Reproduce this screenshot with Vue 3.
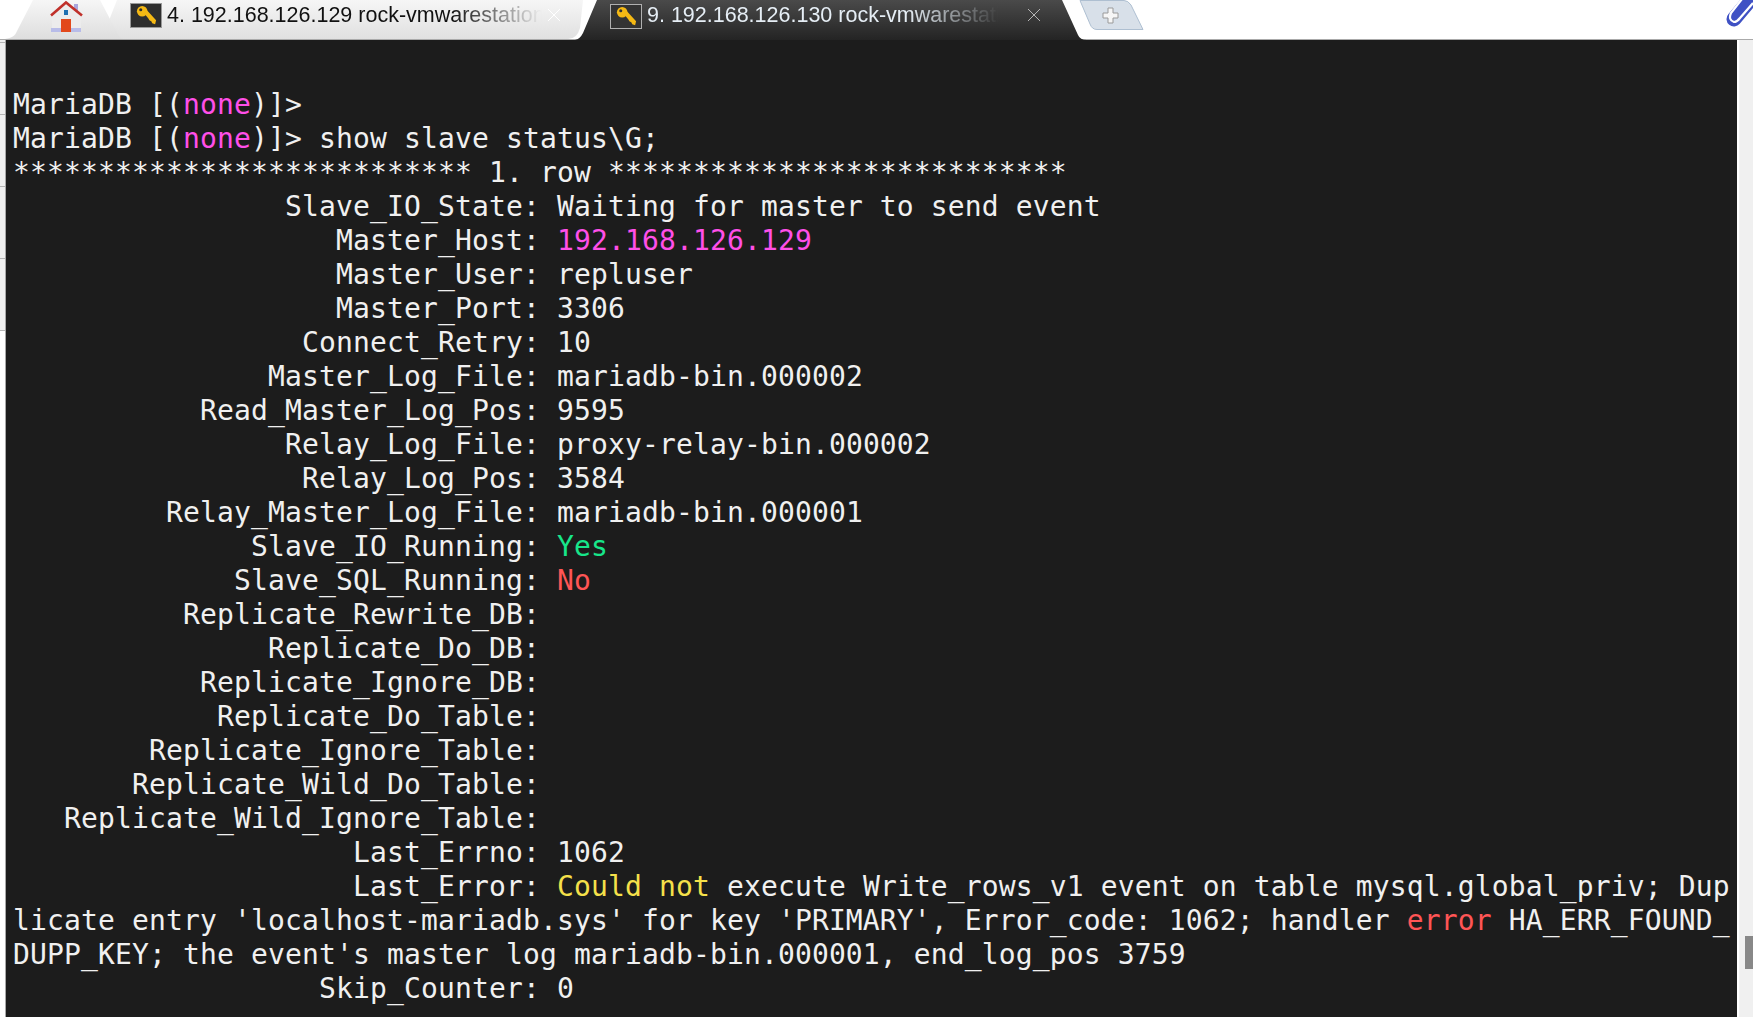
<script setup>
const fields = [
  ['Slave_IO_State', 'Waiting for master to send event'],
  ['Master_Host', '192.168.126.129', 'pink'],
  ['Master_User', 'repluser'],
  ['Master_Port', '3306'],
  ['Connect_Retry', '10'],
  ['Master_Log_File', 'mariadb-bin.000002'],
  ['Read_Master_Log_Pos', '9595'],
  ['Relay_Log_File', 'proxy-relay-bin.000002'],
  ['Relay_Log_Pos', '3584'],
  ['Relay_Master_Log_File', 'mariadb-bin.000001'],
  ['Slave_IO_Running', 'Yes', 'green'],
  ['Slave_SQL_Running', 'No', 'red'],
  ['Replicate_Rewrite_DB', ''],
  ['Replicate_Do_DB', ''],
  ['Replicate_Ignore_DB', ''],
  ['Replicate_Do_Table', ''],
  ['Replicate_Ignore_Table', ''],
  ['Replicate_Wild_Do_Table', ''],
  ['Replicate_Wild_Ignore_Table', ''],
  ['Last_Errno', '1062'],
]
const label = (k) => k.padStart(30, ' ') + ': '
</script>

<template>
  <div class="screen">
    <header class="tabbar">
      <div class="tab home">
        <svg class="shape" viewBox="0 0 119 39" preserveAspectRatio="none"><path d="M0 39 C7 38 10 36 12 31 L28 0 H95 L114 36 Q116 39 119 39 Z" fill="url(#tg1)" /><defs><linearGradient id="tg1" x1="0" y1="0" x2="0" y2="1"><stop offset="0" stop-color="#f6f6f6"/><stop offset="1" stop-color="#dedede"/></linearGradient></defs></svg>
        <svg class="house" viewBox="0 0 34 34">
          <rect x="25" y="4" width="4" height="8" fill="#a9a6dc" />
          <path d="M3 15 L17 4 L32 15 V30 H3 Z" fill="#ececec" />
          <path d="M2 15.5 L17 2.5 L33 15.5" fill="none" stroke="#c0302a" stroke-width="2.6" />
          <rect x="15" y="10" width="4" height="5" fill="#1f6fb0" />
          <rect x="2" y="28" width="30" height="4" fill="#b8bce8" />
          <rect x="12" y="19" width="10" height="13" fill="#e2491c" />
        </svg>
      </div>
      <div class="tab ssh inactive">
        <svg class="shape" viewBox="0 0 489 39" preserveAspectRatio="none"><path d="M0 39 L0 28 L11 0 H477 L474 28 Q471 39 462 39 Z" fill="url(#tg2)" /><defs><linearGradient id="tg2" x1="0" y1="0" x2="0" y2="1"><stop offset="0" stop-color="#f6f6f6"/><stop offset="1" stop-color="#e0e0e0"/></linearGradient></defs></svg>
        <span class="tile dark-tile">
          <svg viewBox="0 0 24 24"><g fill="#f5b914"><circle cx="7.5" cy="7.5" r="5.5" /><path d="M9 9 L12 6 L22 17 L21 21 L18 20 L17 18 L15 17 L14 15 Z" /></g><circle cx="6" cy="6" r="1.6" fill="#2e2e2e" /></svg>
        </span>
        <span class="title">4. 192.168.126.129 rock-vmwarestation</span>
        <svg class="close" viewBox="0 0 14 14"><path d="M1 1 L13 13 M13 1 L1 13" stroke="#fff" stroke-width="1" /></svg>
      </div>
      <div class="tab ssh active">
        <svg class="shape" viewBox="0 0 512 40" preserveAspectRatio="none"><path d="M0 40 Q5 39 8 33 L22 0 H487 L503 35 Q505 40 512 40 Z" fill="url(#tg3)" /><defs><linearGradient id="tg3" x1="0" y1="0" x2="0" y2="1"><stop offset="0" stop-color="#4a4a4a"/><stop offset="1" stop-color="#242424"/></linearGradient></defs></svg>
        <span class="tile light-tile">
          <svg viewBox="0 0 24 24"><g fill="#f5b914"><circle cx="7.5" cy="7.5" r="5.5" /><path d="M9 9 L12 6 L22 17 L21 21 L18 20 L17 18 L15 17 L14 15 Z" /></g><circle cx="6" cy="6" r="1.6" fill="#333" /></svg>
        </span>
        <span class="title">9. 192.168.126.130 rock-vmwarestation</span>
        <svg class="close" viewBox="0 0 14 14"><path d="M1 1 L13 13 M13 1 L1 13" stroke="#b5b5b5" stroke-width="1" /></svg>
      </div>
      <svg class="newtab" viewBox="0 0 66 30">
        <path d="M1 0.5 H45 Q49 0.5 52 5 L64 29.5 H18 Q13 29.5 11 24 Z" fill="#d8e0e9" stroke="#aebfd1" />
        <path d="M29 8 H34 V13 H39 V18 H34 V23 H29 V18 H24 V13 H29 Z" fill="#f6f6f6" stroke="#9a9a9a" />
      </svg>
      <svg class="clip" viewBox="0 0 28 28">
        <path d="M9 19 L30 -6" fill="none" stroke="#3f51c4" stroke-width="15" stroke-linecap="round" />
        <path d="M17 -1 L6 13 Q3 20 9 22 Q12 22 15 18 L28 3" fill="none" stroke="#fff" stroke-width="2.2" />
      </svg>
    </header>

    <main class="body">
      <aside class="gutter"><span class="ticks"></span></aside>
      <section class="term">
        <div class="line"> </div>
        <div class="line">MariaDB [(<span class="pink">none</span>)]&gt; </div>
        <div class="line">MariaDB [(<span class="pink">none</span>)]&gt; show slave status\G;</div>
        <div class="line">*************************** 1. row ***************************</div>
        <div v-for="f in fields" :key="f[0]" class="line">{{ label(f[0]) }}<span :class="f[2]">{{ f[1] }}</span></div>
        <div class="line">{{ label('Last_Error') }}<span class="yellow">Could not</span> execute Write_rows_v1 event on table mysql.global_priv; Dup</div>
        <div class="line">licate entry 'localhost-mariadb.sys' for key 'PRIMARY', Error_code: 1062; handler <span class="red">error</span> HA_ERR_FOUND_</div>
        <div class="line">DUPP_KEY; the event's master log mariadb-bin.000001, end_log_pos 3759</div>
        <div class="line">{{ label('Skip_Counter') }}0</div>
      </section>
      <aside class="scroll"><span class="thumb"></span></aside>
    </main>
  </div>
</template>

<style scoped>
.screen { width: 1753px; height: 1017px; display: flex; flex-direction: column; overflow: hidden; background: #fff; }
.tabbar { height: 39px; flex: none; display: flex; background: #fff; padding-left: 5px; border-bottom: 1px solid #aaa; position: relative; }
.tab { position: relative; height: 39px; flex: none; display: flex; align-items: center; }
.shape { position: absolute; left: 0; top: 0; width: 100%; height: 100%; }
.home { width: 119px; justify-content: center; z-index: 1; }
.house { position: relative; width: 34px; height: 34px; align-self: flex-start; margin-left: 2px; }
.inactive { width: 489px; margin-left: -18px; padding-left: 24px; box-sizing: border-box; }
.active { width: 512px; height: 40px; margin-left: -20px; padding-left: 35px; box-sizing: border-box; z-index: 2; }
.tile { position: relative; width: 32px; height: 25px; box-sizing: border-box; flex: none; margin-top: -8px; display: flex; align-items: flex-start; justify-content: center; overflow: hidden; }
.tile svg { width: 23px; height: 23px; flex: none; }
.dark-tile { background: #2e2e2e; border: 1px solid #999; }
.light-tile { background: #333; border: 1px solid #b0b0b0; }
.title { position: relative; margin-left: 5px; margin-top: -9px; font: 21.5px "Liberation Sans", Arial, sans-serif; white-space: nowrap; }
.inactive .title { color: #111; -webkit-mask-image: linear-gradient(to right, #000 285px, transparent 375px); mask-image: linear-gradient(to right, #000 285px, transparent 375px); }
.active .title { color: #e6eef5; -webkit-mask-image: linear-gradient(to right, #000 260px, transparent 352px); mask-image: linear-gradient(to right, #000 260px, transparent 352px); }
.close { position: absolute; top: 8px; width: 14px; height: 14px; }
.inactive .close { left: 441px; }
.active .close { left: 452px; }
.newtab { width: 66px; height: 30px; flex: none; margin-left: -8px; position: relative; z-index: 1; }
.clip { position: absolute; right: 0; top: 0; width: 28px; height: 28px; }
.body { flex: 1; display: flex; min-height: 0; }
.gutter { width: 6px; flex: none; box-sizing: border-box; background: #fff; border-right: 1px solid #a8a8a8; }
.ticks { display: block; height: 291px; background: repeating-linear-gradient(to bottom, #f0f0f0 0, #f0f0f0 2px, #b5b5b5 2px, #b5b5b5 3px, #f0f0f0 3px, #f0f0f0 72px); }
.term { flex: 1; min-width: 0; background: #1c1c1c; color: #f0f0f0; padding: 14px 0 0 7px; font: 28px "DejaVu Sans Mono", monospace; letter-spacing: 0.14px; overflow: hidden; }
.line { height: 34px; line-height: 34px; white-space: pre; }
.pink { color: #ff4fe8; }
.green { color: #17e68a; }
.red { color: #ff5555; }
.yellow { color: #f5e04a; }
.scroll { width: 16px; flex: none; background: #f0f0f0; border-left: 2px solid #fff; box-sizing: border-box; position: relative; }
.thumb { position: absolute; left: 6px; right: 0; top: 896px; height: 33px; background: #888; }
</style>
